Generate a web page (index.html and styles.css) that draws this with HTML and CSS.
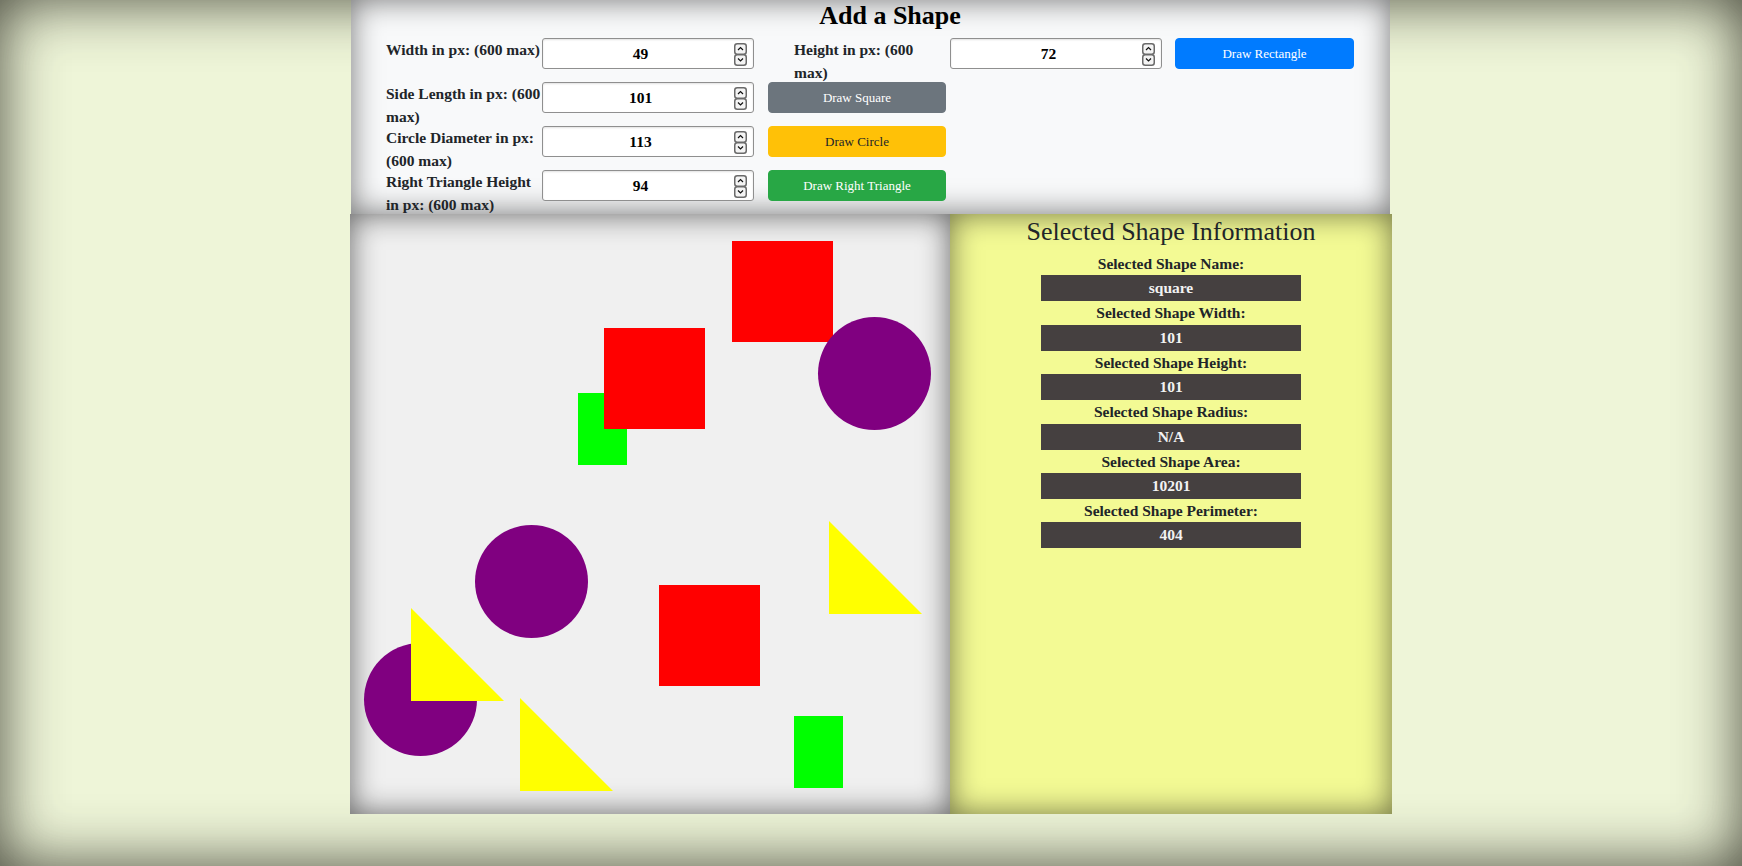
FILE: index.html
```html
<!DOCTYPE html>
<html lang="en">
<head>
<meta charset="utf-8">
<title>Shapes</title>
<link rel="stylesheet" href="styles.css">
</head>
<body>
<div class="app">
  <header class="add-panel">
    <h1 class="title">Add a Shape</h1>
    <div class="form-grid">
      <label class="lbl">Width in px: (600 max)</label>
      <span class="num-wrap">
        <input class="num" type="number" value="49">
        <svg class="spin" width="13" height="23" viewBox="0 0 13 23"><rect x="0.75" y="0.75" width="11.5" height="10.5" rx="2.5" fill="#f4f4f4" stroke="#6a6a6a" stroke-width="1.5"/><rect x="0.75" y="11.75" width="11.5" height="10.5" rx="2.5" fill="#f4f4f4" stroke="#6a6a6a" stroke-width="1.5"/><polyline points="4,7 6.5,4.5 9,7" fill="none" stroke="#111" stroke-width="1.2"/><polyline points="4,15.5 6.5,18 9,15.5" fill="none" stroke="#111" stroke-width="1.2"/></svg>
      </span>
      <label class="lbl lbl-inline">Height in px: (600 max)</label>
      <span class="num-wrap num-second">
        <input class="num" type="number" value="72">
        <svg class="spin" width="13" height="23" viewBox="0 0 13 23"><rect x="0.75" y="0.75" width="11.5" height="10.5" rx="2.5" fill="#f4f4f4" stroke="#6a6a6a" stroke-width="1.5"/><rect x="0.75" y="11.75" width="11.5" height="10.5" rx="2.5" fill="#f4f4f4" stroke="#6a6a6a" stroke-width="1.5"/><polyline points="4,7 6.5,4.5 9,7" fill="none" stroke="#111" stroke-width="1.2"/><polyline points="4,15.5 6.5,18 9,15.5" fill="none" stroke="#111" stroke-width="1.2"/></svg>
      </span>
      <button class="btn btn-primary btn-last">Draw Rectangle</button>

      <label class="lbl">Side Length in px: (600 max)</label>
      <span class="num-wrap">
        <input class="num" type="number" value="101">
        <svg class="spin" width="13" height="23" viewBox="0 0 13 23"><rect x="0.75" y="0.75" width="11.5" height="10.5" rx="2.5" fill="#f4f4f4" stroke="#6a6a6a" stroke-width="1.5"/><rect x="0.75" y="11.75" width="11.5" height="10.5" rx="2.5" fill="#f4f4f4" stroke="#6a6a6a" stroke-width="1.5"/><polyline points="4,7 6.5,4.5 9,7" fill="none" stroke="#111" stroke-width="1.2"/><polyline points="4,15.5 6.5,18 9,15.5" fill="none" stroke="#111" stroke-width="1.2"/></svg>
      </span>
      <button class="btn btn-secondary">Draw Square</button>

      <label class="lbl">Circle Diameter in px: (600 max)</label>
      <span class="num-wrap">
        <input class="num" type="number" value="113">
        <svg class="spin" width="13" height="23" viewBox="0 0 13 23"><rect x="0.75" y="0.75" width="11.5" height="10.5" rx="2.5" fill="#f4f4f4" stroke="#6a6a6a" stroke-width="1.5"/><rect x="0.75" y="11.75" width="11.5" height="10.5" rx="2.5" fill="#f4f4f4" stroke="#6a6a6a" stroke-width="1.5"/><polyline points="4,7 6.5,4.5 9,7" fill="none" stroke="#111" stroke-width="1.2"/><polyline points="4,15.5 6.5,18 9,15.5" fill="none" stroke="#111" stroke-width="1.2"/></svg>
      </span>
      <button class="btn btn-warning">Draw Circle</button>

      <label class="lbl">Right Triangle Height in px: (600 max)</label>
      <span class="num-wrap">
        <input class="num" type="number" value="94">
        <svg class="spin" width="13" height="23" viewBox="0 0 13 23"><rect x="0.75" y="0.75" width="11.5" height="10.5" rx="2.5" fill="#f4f4f4" stroke="#6a6a6a" stroke-width="1.5"/><rect x="0.75" y="11.75" width="11.5" height="10.5" rx="2.5" fill="#f4f4f4" stroke="#6a6a6a" stroke-width="1.5"/><polyline points="4,7 6.5,4.5 9,7" fill="none" stroke="#111" stroke-width="1.2"/><polyline points="4,15.5 6.5,18 9,15.5" fill="none" stroke="#111" stroke-width="1.2"/></svg>
      </span>
      <button class="btn btn-success">Draw Right Triangle</button>
    </div>
  </header>

  <div class="workspace">
    <div class="canvas">
      <svg class="shapes" width="600" height="600" viewBox="0 0 600 600">
        <rect x="228" y="179" width="49" height="72" fill="#00ff00"/>
        <rect x="254" y="114" width="101" height="101" fill="#ff0000"/>
        <rect x="382" y="27" width="101" height="101" fill="#ff0000"/>
        <circle cx="524.5" cy="159.5" r="56.5" fill="#800080"/>
        <circle cx="181.5" cy="367.5" r="56.5" fill="#800080"/>
        <circle cx="70.5" cy="485.5" r="56.5" fill="#800080"/>
        <polygon points="61,394 61,487 154,487" fill="#ffff00"/>
        <polygon points="479,307 479,400 572,400" fill="#ffff00"/>
        <polygon points="170,484 170,577 263,577" fill="#ffff00"/>
        <rect x="309" y="371" width="101" height="101" fill="#ff0000"/>
        <rect x="444" y="502" width="49" height="72" fill="#00ff00"/>
      </svg>
    </div>

    <aside class="info">
      <h2 class="info-title">Selected Shape Information</h2>
      <div class="info-list">
        <div class="info-label">Selected Shape Name:</div>
        <div class="info-value">square</div>
        <div class="info-label">Selected Shape Width:</div>
        <div class="info-value">101</div>
        <div class="info-label">Selected Shape Height:</div>
        <div class="info-value">101</div>
        <div class="info-label">Selected Shape Radius:</div>
        <div class="info-value">N/A</div>
        <div class="info-label">Selected Shape Area:</div>
        <div class="info-value">10201</div>
        <div class="info-label">Selected Shape Perimeter:</div>
        <div class="info-value">404</div>
      </div>
    </aside>
  </div>
</div>
</body>
</html>
```

FILE: styles.css
```css
* {
  box-sizing: border-box;
}

html, body {
  margin: 0;
  padding: 0;
  height: 100%;
}

body {
  font-family: "Liberation Serif", "Times New Roman", serif;
  color: #212529;
  background: #eef5d8;
  box-shadow: inset 0 0 60px rgba(40, 40, 30, 0.85);
  min-height: 100vh;
  overflow: hidden;
}

.app {
  width: 1042px;
  margin: 0 auto;
}

.add-panel {
  margin: 0 2px 0 1px;
  height: 214px;
  background: #f8f9fa;
  box-shadow: inset 0 0 30px rgba(0, 0, 0, 0.55);
  padding-left: 35px;
}

.title {
  margin: 0 0 7px 0;
  padding-left: 4px;
  font-size: 26px;
  line-height: 31px;
  font-weight: bold;
  text-align: center;
  color: #000;
}

.form-grid {
  display: grid;
  grid-template-columns: 156px 212px 192px 216px 192px;
  grid-auto-rows: 44px;
  align-items: start;
}

.lbl {
  grid-column: 1;
  font-size: 15.5px;
  line-height: 23.2px;
  font-weight: bold;
  color: #212529;
}

.lbl-inline {
  grid-column: 3;
  padding-left: 40px;
}

.num-wrap {
  grid-column: 2;
  position: relative;
  display: block;
  width: 212px;
  height: 31px;
}

.num {
  display: block;
  width: 212px;
  height: 31px;
  border: 1px solid #8f8f8f;
  border-radius: 3px;
  background: #fff;
  box-shadow: inset 0 1px 2px rgba(0, 0, 0, 0.12);
  font-family: "Liberation Serif", "Times New Roman", serif;
  font-size: 15.5px;
  font-weight: bold;
  text-align: center;
  color: #000;
  padding: 0 4px;
  margin: 0;
}

.spin {
  position: absolute;
  top: 4.5px;
  right: 7px;
  display: block;
  pointer-events: none;
}

.num-second {
  grid-column: 4;
  margin-left: 4px;
}

.btn {
  grid-column: 3;
  margin-left: 14px;
  width: 178px;
  height: 31px;
  border: 1px solid transparent;
  border-radius: 4px;
  font-family: "Liberation Serif", "Times New Roman", serif;
  font-size: 13px;
  color: #fff;
  padding: 0;
}

.btn-last {
  grid-column: 5;
  margin-left: 13px;
  width: 179px;
}

.btn-primary { background: #007bff; border-color: #007bff; }
.btn-secondary { background: #6c757d; border-color: #6c757d; }
.btn-warning { background: #ffc107; border-color: #ffc107; color: #212529; }
.btn-success { background: #28a745; border-color: #28a745; }

.workspace {
  display: flex;
  height: 600px;
}

.canvas {
  width: 600px;
  height: 600px;
  flex: none;
  background: #f0f0f0;
  box-shadow: inset 0 0 30px rgba(0, 0, 0, 0.6);
}

.shapes {
  display: block;
}

.info {
  flex: 1;
  background: #f3fa94;
  box-shadow: inset 0 0 30px rgba(0, 0, 0, 0.55);
  text-align: center;
}

.info-title {
  margin: 0 0 5px 0;
  padding-top: 2px;
  font-size: 26px;
  line-height: 31px;
  font-weight: normal;
  color: #212529;
}

.info-list {
  display: flex;
  flex-direction: column;
  align-items: center;
}

.info-label {
  font-size: 15.5px;
  line-height: 23.4px;
  font-weight: bold;
  color: #212529;
}

.info-value {
  width: 260px;
  height: 26px;
  line-height: 26px;
  background: #454040;
  color: #f2f2f2;
  font-size: 15.5px;
  font-weight: bold;
}
```
